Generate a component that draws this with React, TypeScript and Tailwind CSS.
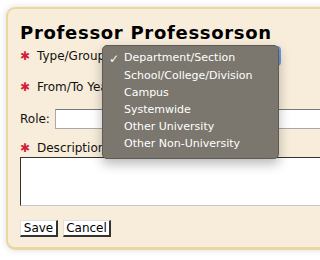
import React from "react";

const font = { fontFamily: '"DejaVu Sans", Verdana, sans-serif' };

function Star() {
  return (
    <span className="w-[17px] shrink-0 text-[12px] leading-none text-[#d0213a]">✱</span>
  );
}

export default function App() {
  const items = [
    "Department/Section",
    "School/College/Division",
    "Campus",
    "Systemwide",
    "Other University",
    "Other Non-University",
  ];
  return (
    <div className="relative h-[260px] w-full overflow-hidden bg-white" style={font}>
      <div className="ml-[6px] mt-[7px] w-[400px] min-w-[400px] max-w-none rounded-[9px] border-2 border-b-[3px] border-[#ead8a3] bg-[#f8eddb] pl-[12px] pt-[13px] pb-[10px] shadow-[0_0_7px_rgba(0,0,0,0.14)]">
        <div className="text-[18px] font-bold leading-[22px] tracking-[0.7px] text-black">
          Professor Professorson
        </div>
        <div className="mt-[2px] flex h-[20px] items-center text-[12px] text-[#111]">
          <Star />
          <span>Type/Group</span>
          <div className="ml-[4px] h-[20px] w-[172px] rounded-[4px] border-2 border-[#6a9de8] bg-white" />
        </div>
        <div className="mt-[11px] flex h-[20px] items-center text-[12px] text-[#111]">
          <Star />
          <span>From/To Year</span>
          <div className="ml-[4px] h-[18px] w-[50px] border border-[#aaa] bg-white" />
        </div>
        <div className="mt-[12px] flex h-[20px] items-center text-[12px] text-[#111]">
          <span className="w-[35px] shrink-0">Role:</span>
          <div className="h-[20px] w-[320px] shrink-0 border border-[#a9a9a9] border-t-[#777] bg-white" />
        </div>
        <div className="mt-[11px] flex h-[16px] items-center text-[12px] text-[#111]">
          <Star />
          <span>Description</span>
        </div>
        <div className="mt-[1px] h-[49px] w-[360px] border border-[#c8c8c8] border-l-[#333] border-t-[#333] bg-white" />
        <div className="mt-[14px] flex gap-[5px] text-[12px] leading-none text-black">
          <button className="flex h-[17px] w-[38px] items-center justify-center border border-[#e0e0e0] border-b-2 border-r-2 border-b-[#333] border-r-[#333] bg-white">
            Save
          </button>
          <button className="flex h-[17px] w-[48px] items-center justify-center border border-[#e0e0e0] border-b-2 border-r-2 border-b-[#333] border-r-[#333] bg-white">
            Cancel
          </button>
        </div>
      </div>

      <div className="absolute left-[102px] top-[45px] w-[177px] rounded-[5px] border border-[#5e5b55] bg-[#7b776e] pb-[5px] pt-[4px] shadow-[0_5px_12px_rgba(0,0,0,0.28)]">
        {items.map((t, i) => (
          <div key={t} className="flex h-[17.2px] items-center text-[11px] text-white">
            <span className="w-[21px] pl-[6px] text-[12px]">{i === 0 ? "✓" : ""}</span>
            <span>{t}</span>
          </div>
        ))}
      </div>
    </div>
  );
}
